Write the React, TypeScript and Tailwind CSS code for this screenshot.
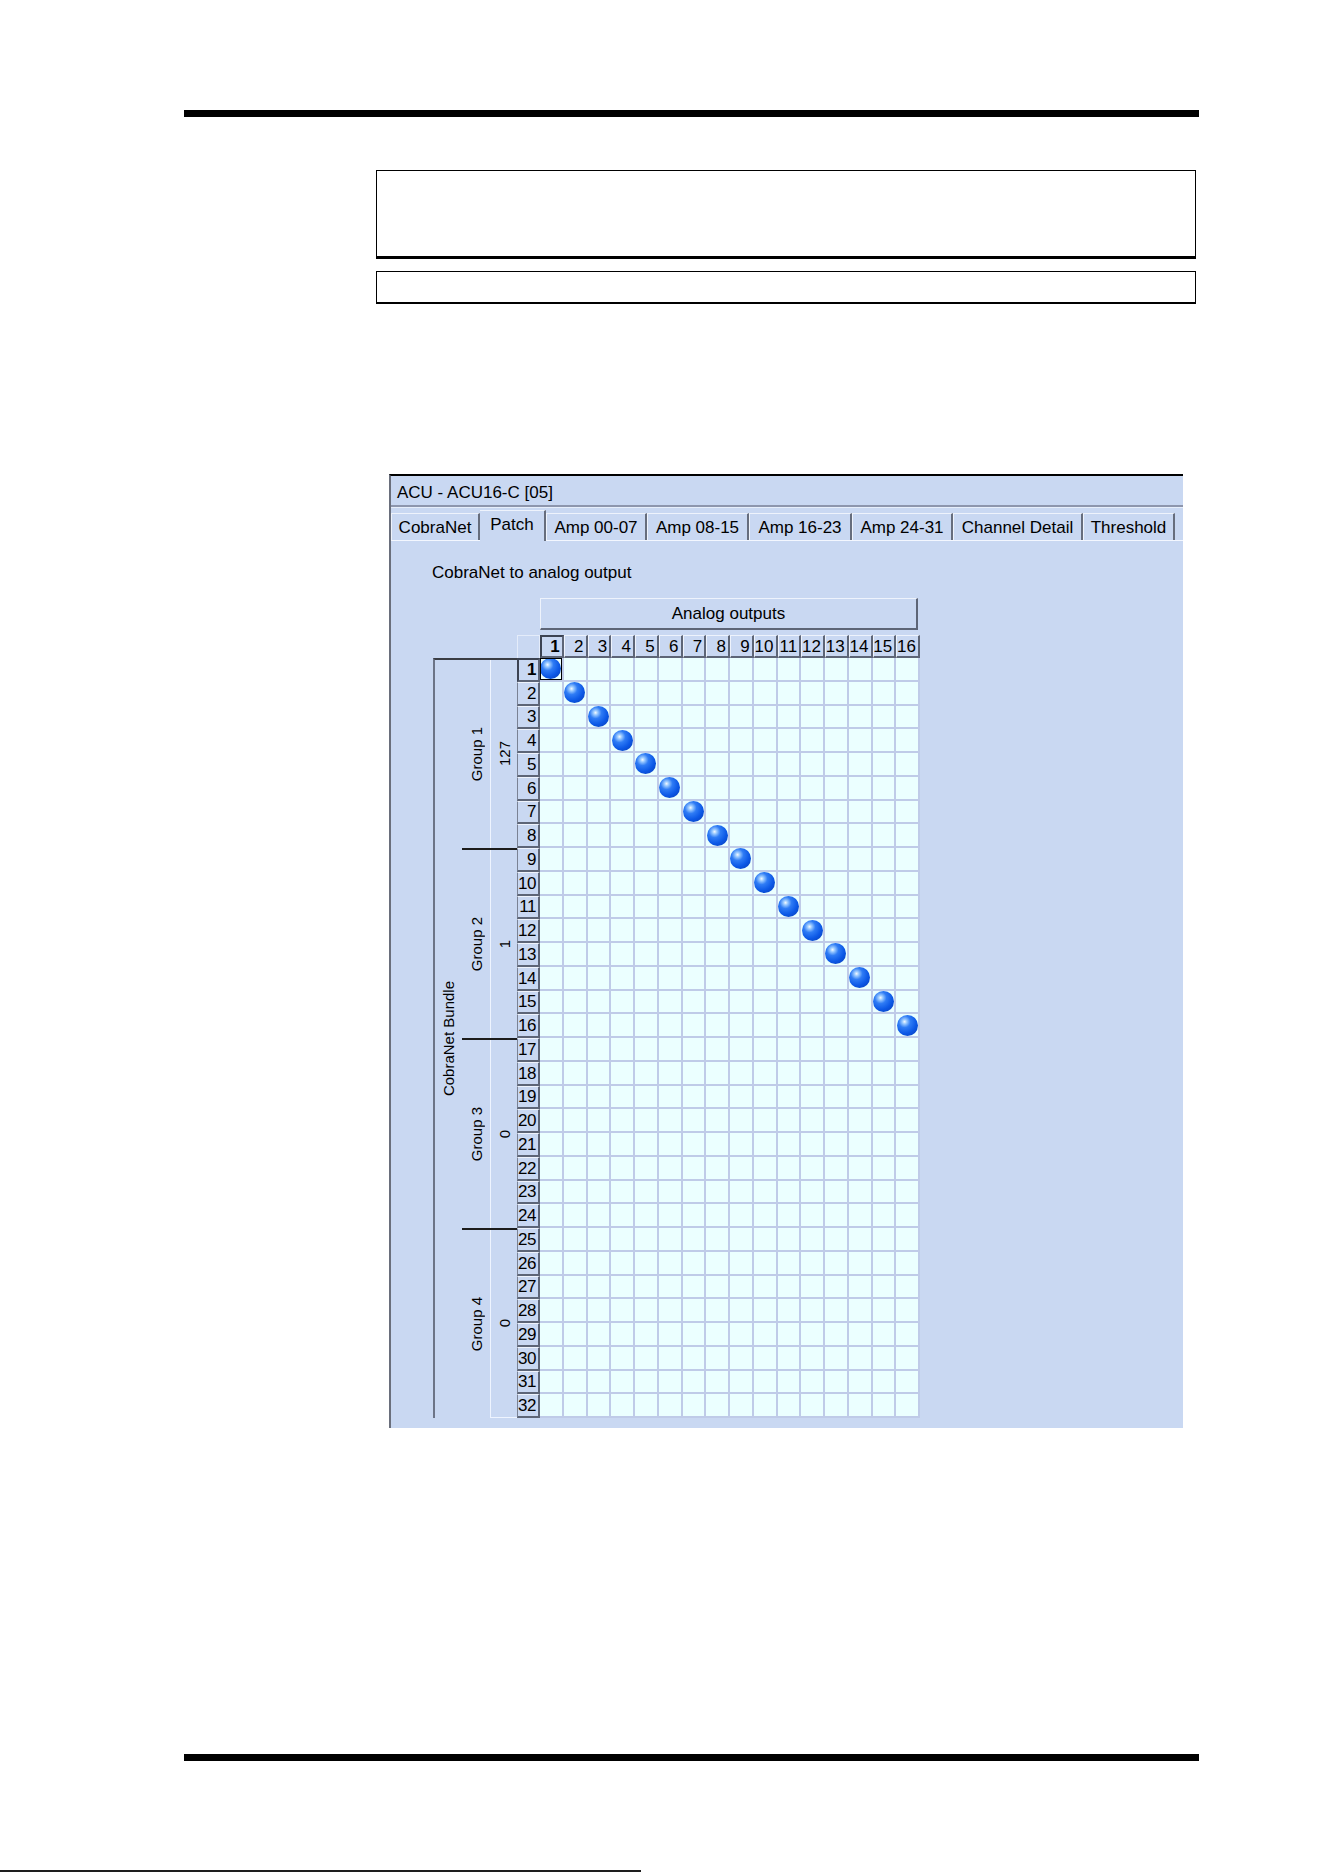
import React from 'react'

const tabs = [
  { label: 'CobraNet', w: 'w-[89px]' },
  { label: 'Patch', w: 'w-[66px]', active: true },
  { label: 'Amp 00-07', w: 'w-[101px]' },
  { label: 'Amp 08-15', w: 'w-[102px]' },
  { label: 'Amp 16-23', w: 'w-[103px]' },
  { label: 'Amp 24-31', w: 'w-[101px]' },
  { label: 'Channel Detail', w: 'w-[130px]' },
  { label: 'Threshold', w: 'w-[92px]' },
]

const groups = [
  { name: 'Group 1', bundle: '127', h: 'h-[188px]' },
  { name: 'Group 2', bundle: '1', h: 'h-[190px]' },
  { name: 'Group 3', bundle: '0', h: 'h-[190px]' },
  { name: 'Group 4', bundle: '0', h: 'h-[190px]' },
]

const outputs = Array.from({ length: 16 }, (_, i) => i + 1)
const inputs = Array.from({ length: 32 }, (_, i) => i + 1)

function Ball() {
  return (
    <div className="w-[21px] h-[21px] shrink-0 rounded-full bg-[radial-gradient(circle_at_36%_32%,#f4f9ff_0%,#9ccbff_11%,#2f7cf5_30%,#0c58e6_60%,#0738ad_100%)]" />
  )
}

function VerticalText({ children, className = '' }: { children: React.ReactNode; className?: string }) {
  return <span className={`[writing-mode:vertical-rl] rotate-180 leading-none whitespace-nowrap ${className}`}>{children}</span>
}

function PatchMatrix() {
  return (
    <div className="ml-[42px] mt-[15px]">
      <div className="ml-[107px] w-[378px] h-[32px] flex items-center justify-center border-t border-l border-[#eef3fc] border-r-2 border-b-2 border-r-[#5d6577] border-b-[#5d6577] text-[17px]">
        Analog outputs
      </div>

      {/* column headers */}
      <div className="mt-[5px] flex h-[23px]">
        <div className="w-[84px]" />
        <div className="w-[23px] border-t border-l border-r border-[#e4ecfa]" />
        <div className="grid grid-cols-[repeat(16,23.75px)]">
          {outputs.map((n) => (
            <div
              key={n}
              className={`h-[23px] flex items-center justify-end pr-[2px] text-[17px] leading-none border-r-2 border-b-2 border-r-[#5d6577] border-b-[#5d6577] ${
                n === 1 ? 'font-bold border-l-2 border-t-2 border-l-[#3c4352] border-t-[#3c4352]' : 'border-t border-l border-t-[#eef3fc] border-l-[#eef3fc]'
              }`}
            >
              {n}
            </div>
          ))}
        </div>
      </div>

      <div className="flex">
        {/* bundle / group labels */}
        <div className="w-[84px] h-[760px] flex border-t-2 border-t-[#3a3d44] border-l-2 border-l-[#6c7487]">
          <div className="w-[27px] flex items-center justify-center">
            <VerticalText className="text-[15px]">CobraNet Bundle</VerticalText>
          </div>
          <div className="flex-1 flex flex-col">
            {groups.map((g, i) => (
              <div key={g.name} className={`${g.h} flex ${i > 0 ? 'border-t-2 border-t-[#1c1c1c]' : ''}`}>
                <div className="w-[28px] flex items-center justify-center">
                  <VerticalText className="text-[15px]">{g.name}</VerticalText>
                </div>
                <div className={`w-[27px] flex items-center justify-center border-l border-l-[#eef4ff] ${i === 3 ? 'border-b border-b-[#eef4ff]' : ''}`}>
                  <VerticalText className="text-[15px]">{g.bundle}</VerticalText>
                </div>
              </div>
            ))}
          </div>
        </div>

        {/* row headers */}
        <div className="w-[23px] grid grid-rows-[repeat(32,23.75px)]">
          {inputs.map((n) => (
            <div
              key={n}
              className={`flex items-center justify-end pr-[2px] text-[17px] leading-none tracking-[-0.5px] border-r-2 border-b-2 border-r-[#5d6577] border-b-[#5d6577] ${
                n === 1 ? 'font-bold border-l-2 border-t-2 border-l-[#3c4352] border-t-[#3c4352]' : 'border-l border-t border-l-[#7a8294] border-t-[#eef3fc]'
              }`}
            >
              {n}
            </div>
          ))}
        </div>

        {/* crosspoints */}
        <div className="bg-[#bfcbe8] pr-[2px] pb-[2px] grid grid-cols-[repeat(16,21.75px)] grid-rows-[repeat(32,21.75px)] gap-[2px]">
          {inputs.map((row) =>
            outputs.map((col) => (
              <div
                key={`${row}-${col}`}
                className={`bg-[#ebffff] flex items-center justify-center ${row === 1 && col === 1 ? 'outline outline-1 outline-black -outline-offset-1' : ''}`}
              >
                {row === col && <Ball />}
              </div>
            ))
          )}
        </div>
      </div>
    </div>
  )
}

function PatchWindow() {
  return (
    <div className="ml-[389px] mt-[170px] w-[794px] h-[954px] overflow-hidden bg-[#c9d8f2] border-t-2 border-t-black border-l-2 border-l-[#6a6f7c] flex flex-col">
      <div className="h-[29px] pl-[6px] pt-[3px] flex items-center text-[17px] leading-none">ACU - ACU16-C [05]</div>
      <div className="h-[2px] bg-[#8d96ad]" />
      <div className="h-px bg-[#e6eefb]" />

      {/* tab strip */}
      <div className="mt-[5px] h-[27px] flex items-end">
        {tabs.map((t) =>
          t.active ? (
            <div
              key={t.label}
              className={`${t.w} relative z-10 -mb-px h-[31px] flex justify-center pt-[5px] text-[17px] leading-none bg-[#c9d8f2] border-t border-t-[#eef3fc] border-r-2 border-r-[#666d7d]`}
            >
              {t.label}
            </div>
          ) : (
            <div
              key={t.label}
              className={`${t.w} h-[27px] flex items-center justify-center text-[17px] leading-none border-t border-l border-t-[#eef3fc] border-l-[#eef3fc] border-r-2 border-r-[#666d7d]`}
            >
              {t.label}
            </div>
          )
        )}
      </div>

      <div className="flex-1 border-t border-t-[#f3f7ff]">
        <div className="mt-[22px] pl-[41px] text-[17px] leading-[20px]">CobraNet to analog output</div>
        <PatchMatrix />
      </div>
    </div>
  )
}

export default function App() {
  return (
    <div className="w-[1323px] h-[1872px] overflow-hidden bg-white text-black font-['Liberation_Sans',Arial,sans-serif]">
      <div className="pt-[110px]">
        <div className="ml-[184px] w-[1015px] h-[7px] bg-black" />
        <div className="ml-[376px] mt-[53px] w-[820px] h-[89px] border border-black border-b-[3px]" />
        <div className="ml-[376px] mt-[12px] w-[820px] h-[33px] border border-black border-b-2" />
        <PatchWindow />
        <div className="ml-[184px] mt-[326px] w-[1015px] h-[7px] bg-black" />
        <div className="mt-[109px] w-[641px] h-[2px] bg-[#1e1e1e]" />
      </div>
    </div>
  )
}
